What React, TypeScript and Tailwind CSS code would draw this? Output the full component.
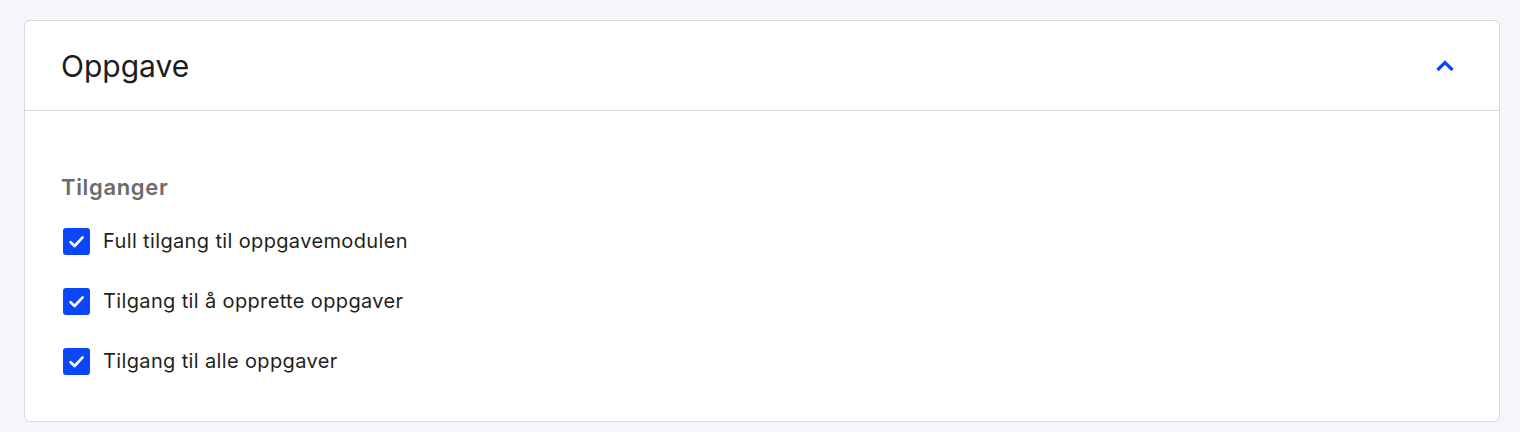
import { useState } from "react";

const permissions = [
  "Full tilgang til oppgavemodulen",
  "Tilgang til å opprette oppgaver",
  "Tilgang til alle oppgaver",
];

function Checkbox({ checked, onChange }: { checked: boolean; onChange: () => void }) {
  return (
    <button
      type="button"
      onClick={onChange}
      className={`ml-[2px] flex h-[27px] w-[27px] shrink-0 items-center justify-center rounded-[3px] ${
        checked ? "bg-[#0c46fb]" : "border-2 border-[#b9bcc4] bg-white"
      }`}
    >
      {checked && (
        <svg width="27" height="27" viewBox="0 0 27 27" fill="none">
          <polyline
            points="7.6,14.2 11.6,18 19.6,9.4"
            stroke="white"
            strokeWidth="2.6"
            strokeLinecap="round"
            strokeLinejoin="round"
          />
        </svg>
      )}
    </button>
  );
}

export default function App() {
  const [open, setOpen] = useState(true);
  const [checked, setChecked] = useState([true, true, true]);

  return (
    <div className="min-h-[432px] bg-[#f5f6fa] pt-5 pl-6 pr-5 font-['Inter',sans-serif]">
      <div className="rounded-md border border-[#d7d8dc] bg-white">
        <div
          className={`flex h-[90px] items-center justify-between pl-9 pr-11 ${
            open ? "border-b border-[#d7d8dc]" : ""
          }`}
        >
          <h2 className="text-[30px] leading-[40px] text-[#1c1c1e]">Oppgave</h2>
          <button type="button" onClick={() => setOpen(!open)}>
            <svg width="20" height="20" viewBox="0 0 20 20" fill="none">
              <polyline
                points="2.5,14 10,6.5 17.5,14"
                stroke="#0c46fb"
                strokeWidth="3.2"
                strokeLinejoin="miter"
              />
            </svg>
          </button>
        </div>

        {open && (
          <div className="pl-9 pt-[62px] pb-[46px]">
            <h3 className="text-[22px] leading-[28px] font-semibold tracking-[0.03em] text-[#6b6b6d]">
              Tilganger
            </h3>
            <div className="mt-[27px] flex flex-col gap-[33px]">
              {permissions.map((p, i) => (
                <label key={p} className="flex h-[27px] items-center gap-[13px]">
                  <Checkbox
                    checked={checked[i]}
                    onChange={() =>
                      setChecked(checked.map((c, j) => (j === i ? !c : c)))
                    }
                  />
                  <span className="text-[20px] leading-[27px] tracking-[0.018em] text-[#1f1f21]">
                    {p}
                  </span>
                </label>
              ))}
            </div>
          </div>
        )}
      </div>
    </div>
  );
}
